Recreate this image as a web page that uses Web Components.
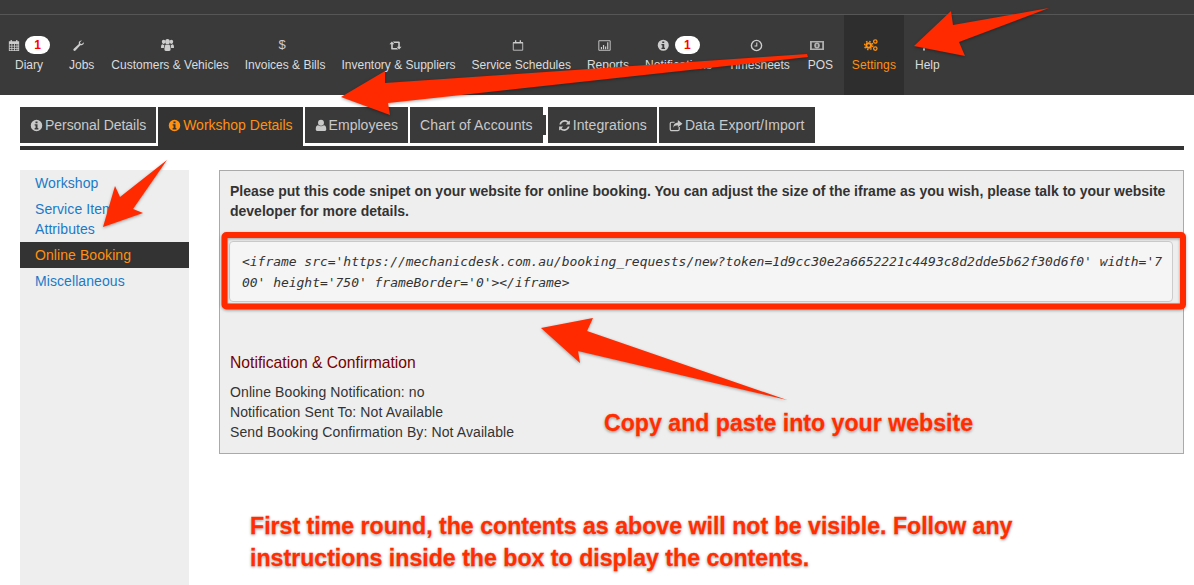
<!DOCTYPE html>
<html><head><meta charset="utf-8">
<style>
html,body{margin:0;padding:0;background:#fff}
body{width:1194px;height:585px;overflow:hidden;position:relative;font-family:"Liberation Sans",Arial,sans-serif}
</style></head><body>
<app-page></app-page>
<script>
const I={
calendar:'<svg viewBox="0 0 14 14" width="12" height="13" preserveAspectRatio="none"><path fill="currentColor" fill-rule="evenodd" d="M1 2.500h2V1h1.500v1.500h5V1H11v1.500h2V13H1zM2 5.500v1.700h2V5.500zm3 0v1.700h2V5.500zm3 0v1.700h2V5.500zm3 0v1.700h1V5.500zM2 8.200v1.700h2V8.200zm3 0v1.700h2V8.200zm3 0v1.700h2V8.200zm3 0v1.700h1V8.200zM2 10.900V12h2v-1.100zm3 0V12h2v-1.100zm3 0V12h2v-1.100zm3 0V12h1v-1.100z"/></svg>',
wrench:'<svg viewBox="0 0 14 14" width="13" height="13"><path fill="currentColor" d="M12.800 3.600c.2 1.400-.8 3-2.400 3.200-.5.1-1 0-1.400-.1L3.800 12.400c-.6.6-1.500.6-2 .1s-.5-1.300.1-1.900l5.500-5.200c-.2-.5-.2-1-.1-1.500.4-1.500 1.900-2.500 3.400-2.200L8.600 3.600l.4 1.500 1.500.3z"/></svg>',
users:'<svg viewBox="0 .5 16 12.500" width="13" height="12" preserveAspectRatio="none"><g fill="currentColor"><circle cx="3.200" cy="3.400" r="2.200"/><circle cx="12.800" cy="3.400" r="2.200"/><circle cx="8" cy="3.400" r="2.900"/><path d="M0 9.500C0 7 .8 6 2 6c.7.6 1.500.8 2.400.6-.5.8-.8 1.700-.8 3.400H1c-.6 0-1-.2-1-.5zM16 9.500C16 7 15.200 6 14 6c-.7.6-1.500.8-2.400.6.5.8.8 1.700.8 3.400H15c.6 0 1-.2 1-.5zM4.200 11.200c0-3 1-4.900 2.400-4.900.9.700 1.900.7 2.800 0 1.400 0 2.400 1.900 2.400 4.900 0 1-.6 1.800-1.800 1.800H6c-1.200 0-1.800-.8-1.800-1.800z"/></g></svg>',
retweet:'<svg viewBox="0 0 14 10" width="13" height="9"><path fill="currentColor" d="M.3 3.700 3 .5 5.700 3.700H4V7.700H8.500L10 9.500H3.300C2.600 9.500 2.200 9.100 2.200 8.500V3.700zM13.700 6.300 11 9.500 8.300 6.300H10V2.300H5.500L4 .5H10.700C11.400 .5 11.800 .9 11.800 1.500V6.300z"/></svg>',
calEmpty:'<svg viewBox="0 0 14 14" width="12" height="13"><path fill="none" stroke="currentColor" d="M1.500 3.500h11v9h-11z"/><path fill="currentColor" d="M1.500 3h11v1.800h-11zM3.500 .8h1.500V4H3.500zM9 .8h1.500V4H9z"/></svg>',
reports:'<svg viewBox="0 0 14 12" width="13" height="11"><path fill="none" stroke="currentColor" d="M.8.8h12.400v10.400H.8z"/><path fill="currentColor" d="M3 7.500h1.300V10H3zm2.300-2h1.300V10H5.300zm2.300 1.500h1.300v3H7.600zm2.300-4.500h1.300V10H9.900z"/></svg>',
info:'<svg class="i" viewBox="0 0 14 14"><path fill="currentColor" fill-rule="evenodd" d="M7 .8a6.200 6.200 0 1 0 0 12.400A6.200 6.200 0 0 0 7 .8zM5.900 2.800h2.200v1.800H5.900zM5 5.600h3.100v4.200h.9v1.500H5V9.800h1V7.100H5z"/></svg>',
question:'<svg viewBox="0 0 8 12" width="8" height="12"><path fill="none" stroke="currentColor" stroke-width="1.800" d="M1 3.500C1 .6 7 .4 7 3.500 7 5.600 4 5.500 4 8"/><path fill="currentColor" d="M3 9.300h2V11.500H3z"/></svg>',
clock:'<svg viewBox="0 0 14 14" width="13" height="13"><circle cx="7" cy="7" r="5.500" fill="none" stroke="currentColor" stroke-width="1.500"/><path fill="none" stroke="currentColor" stroke-width="1.200" d="M7.300 3.800V7.600H4.800"/></svg>',
money:'<svg viewBox="0 0 14 9" width="14" height="9"><path fill="currentColor" fill-opacity=".8" fill-rule="evenodd" d="M0 0h14v9H0zM1.800 1.500v6h10.400v-6z"/><ellipse cx="7" cy="4.500" rx="2.800" ry="2.900" fill="currentColor" fill-opacity=".8"/><path fill="#3a3a3a" d="M6.400 3h1.200v3H6.400z"/></svg>',
cogs:'<svg viewBox="0 0 14 12" width="14" height="12"><circle cx="4.700" cy="6.500" r="3.300" fill="currentColor"/><circle cx="4.700" cy="6.500" r="4.100" fill="none" stroke="currentColor" stroke-width="1.500" stroke-dasharray="1.500 1.720"/><circle cx="4.700" cy="6.500" r="1.300" fill="#2e2e2e"/><g fill="none" stroke="currentColor" stroke-width="1.300"><circle cx="11.300" cy="2.500" r="1.700"/><circle cx="11.300" cy="9.600" r="1.700"/></g></svg>',
user:'<svg viewBox="0 0 13 14" width="12" height="13"><g fill="currentColor"><circle cx="6.500" cy="4" r="3.200"/><path d="M.8 11c0-2.800 1-4.300 2.600-4.300 1.800 1.500 4.400 1.500 6.200 0 1.600 0 2.600 1.500 2.600 4.300 0 1.300-.8 2-2 2H2.800c-1.200 0-2-.7-2-2z"/></g></svg>',
refresh:'<svg viewBox="0 0 14 14" width="13" height="13"><path fill="currentColor" d="M12.800 1.500v4.300H8.500l1.700-1.700C9.500 3.500 8.400 3 7.200 3 5.400 3 3.900 4.100 3.400 5.800H1.500C2 3.100 4.400 1.200 7.200 1.200c1.700 0 3.200.7 4.300 1.600zM1.200 12.500V8.200h4.300L3.800 9.900c.7.600 1.800 1.100 3 1.100 1.800 0 3.300-1.100 3.800-2.800h1.900c-.5 2.700-2.900 4.600-5.700 4.600-1.700 0-3.200-.7-4.300-1.600z"/></svg>',
share:'<svg viewBox="0 0 15 14" width="14" height="13"><path fill="none" stroke="currentColor" stroke-width="1.300" d="M11 8.500V11c0 1-.6 1.500-1.500 1.500H2.800c-.9 0-1.500-.5-1.500-1.500V5c0-1 .6-1.500 1.500-1.500H6"/><path fill="currentColor" d="M9.500 1 14.500 5 9.500 9V6.800C7 6.800 5.500 7.500 4.500 9.500c0-3.500 1.800-5.700 5-5.800z"/></svg>',
dollar:'<span style="font:13px/14px \'Liberation Sans\',sans-serif">$</span>'
};
function def(name,css,html){customElements.define(name,class extends HTMLElement{connectedCallback(){if(this.shadowRoot)return;const r=this.attachShadow({mode:'open'});r.innerHTML='<style>'+css+'</style>'+(typeof html==='function'?html(this):html);}});}

def('nav-item',`
:host{display:flex;flex-direction:column;align-items:center;padding:0 var(--pad,8px);padding-right:var(--padr,var(--pad,8px));height:80px;box-sizing:border-box;color:#dcdcdc;font-size:12px;line-height:14px;flex:none;letter-spacing:var(--ls,0)}
:host([active]){background:#2e2e2e;color:#ff9010}
.top{height:18px;margin-top:21px;display:flex;align-items:center;gap:5px;color:#cdcdcd}
.top.solo{padding-right:6px}
:host([active]) .top{color:#ff9010}
.ic{display:flex;align-items:center;justify-content:center}
.ic svg.i{width:12.5px;height:12.5px}
.b{background:#fff;color:#f00;font-weight:700;font-size:12px;line-height:18px;width:25px;height:18px;border-radius:9px;text-align:center}
.l{margin-top:4px;white-space:nowrap;min-width:var(--min,0);text-align:center}
`,h=>{const b=h.getAttribute('badge');return `<div class="top${b?'':' solo'}"><span class="ic">${I[h.getAttribute('icon')]}</span>${b?`<span class="b">${b}</span>`:''}</div><div class="l"><slot></slot></div>`});

def('top-bar',`
:host{display:block;height:95px;background:#3a3a3a;box-sizing:border-box}
.line{height:15px;box-sizing:border-box;border-bottom:1px solid #565656}
nav{display:flex;height:80px}
`,`<div class="line"></div><nav><slot></slot></nav>`);

def('tab-item',`
:host{display:flex;align-items:center;gap:2px;height:36px;padding:0 10px;background:#3a3a3a;color:#c9c9c9;font-size:14px;flex:none;position:relative;white-space:nowrap;letter-spacing:var(--ls,0)}
:host([active]){background:#333;color:#ff9010;height:39px;padding-bottom:3px;box-sizing:border-box}
.ic{display:flex;align-items:center;justify-content:center}
.ic svg.i{width:13px;height:13px}
:host([notch])::after{content:"";position:absolute;left:100%;top:8px;height:20px;width:3px;background:#3a3a3a}
`,h=>{const i=h.getAttribute('icon');return (i?`<span class="ic">${I[i]}</span>`:'')+'<slot></slot>'});

def('tab-bar',`
:host{display:flex;align-items:flex-start;gap:2px;margin:12px 10px 0 20px;height:39px;border-bottom:4px solid #333}
`,`<slot></slot>`);

def('side-menu',`
:host{display:block;width:169px;flex:none;background:#eee;height:415px}
`,`<slot></slot>`);
def('side-link',`
:host{display:block;padding:3px 15px;font-size:14px;line-height:20px;color:#1b7ac8;letter-spacing:.08px}
:host([active]){background:#333;color:#ff9010}
`,`<slot></slot>`);

def('code-box',`
:host{display:block;margin:20px 0 0 -1px;background:#f5f5f5;border:1px solid #ccc;border-radius:4px;padding:10px 6px 8px 12px;font:oblique 13px/20.500px "DejaVu Sans Mono",monospace;letter-spacing:-.03px;color:#333;word-break:break-all;white-space:pre-wrap}
`,`<slot></slot>`);

def('info-panel',`
:host{display:block;flex:1;height:284px;box-sizing:border-box;background:#eee;border:1px solid #aaa;padding:10px;color:#333}
.lead{font-weight:700;font-size:14px;line-height:20px;color:#333}
`,`<div class="lead"><slot name="lead"></slot></div><slot></slot>`);

def('notify-info',`
:host{display:block;margin-top:51px;font-size:14px;line-height:20px;color:#333;letter-spacing:.1px}
h4{margin:0 0 9px;font-weight:400;font-size:15.700px;letter-spacing:0;line-height:20px;color:#700}
`,`<h4>Notification &amp; Confirmation</h4><slot></slot>`);

def('note-text',`
:host{position:absolute;color:#ff2d00;font:700 23.150px/32px "Liberation Sans",Arial,sans-serif;-webkit-text-stroke:.3px #ff2d00;text-shadow:0 0 2px #fff,0 1px 3px rgba(0,0,0,.5);white-space:nowrap}
`,`<slot></slot>`);

def('note-layer',`
:host{position:absolute;left:0;top:0;width:1194px;height:585px;pointer-events:none;display:block}
svg{position:absolute;left:0;top:0;filter:drop-shadow(0 1px 1.500px rgba(0,0,0,.35))}
`,`<svg width="1194" height="585" viewBox="0 0 1194 585">
<g fill="#ff2a00">
<polygon points="914,46 951,11 953,25 1049,8 959,42 965,56"/>
<polygon points="341,97 385,71 385,83 807,54 808,57 388,103 390,115"/>
<polygon points="167,160 133,209 143,213 103,227 115,186 120,197"/>
<polygon points="541,328 593,318 587,331 787,400 578,351 580,363"/>
</g>
<rect x="224.500" y="235" width="958.500" height="71.500" rx="2" fill="none" stroke="#ff2a00" stroke-width="6"/>
</svg><slot></slot>`);

def('app-page',`
:host{display:block}
.body{display:flex;gap:30px;margin:20px 10px 0 20px}
`,`<top-bar>
<nav-item icon="calendar" badge="1" style="--padr:10px">Diary</nav-item>
<nav-item icon="wrench" style="--pad:9px">Jobs</nav-item>
<nav-item icon="users">Customers &amp; Vehicles</nav-item>
<nav-item icon="dollar">Invoices &amp; Bills</nav-item>
<nav-item icon="retweet">Inventory &amp; Suppliers</nav-item>
<nav-item icon="calEmpty">Service Schedules</nav-item>
<nav-item icon="reports">Reports</nav-item>
<nav-item icon="info" badge="1" style="--ls:.15px">Notifications</nav-item>
<nav-item icon="clock">Timesheets</nav-item>
<nav-item icon="money" style="--min:29px">POS</nav-item>
<nav-item icon="cogs" active style="margin-left:1px;--ls:.1px">Settings</nav-item>
<nav-item icon="question" style="--pad:11px">Help</nav-item>
</top-bar>
<tab-bar>
<tab-item icon="info" style="--ls:-.05px">Personal Details</tab-item>
<tab-item icon="info" active>Workshop Details</tab-item>
<tab-item icon="user" style="--ls:.02px">Employees</tab-item>
<tab-item notch style="--ls:.13px">Chart of Accounts</tab-item>
<tab-item icon="refresh" style="margin-left:3px;--ls:.08px">Integrations</tab-item>
<tab-item icon="share" style="--ls:.12px">Data Export/Import</tab-item>
</tab-bar>
<div class="body">
<side-menu>
<side-link>Workshop</side-link>
<side-link>Service Item Attributes</side-link>
<side-link active>Online Booking</side-link>
<side-link>Miscellaneous</side-link>
</side-menu>
<info-panel>
<span slot="lead">Please put this code snipet on your website for online booking. You can adjust the size of the iframe as you wish, please talk to your website developer for more details.</span>
<code-box>&lt;iframe src='https://mechanicdesk.com.au/booking_requests/new?token=1d9cc30e2a6652221c4493c8d2dde5b62f30d6f0' width='700' height='750' frameBorder='0'&gt;&lt;/iframe&gt;</code-box>
<notify-info>
<div>Online Booking Notification: no</div>
<div>Notification Sent To: Not Available</div>
<div>Send Booking Confirmation By: Not Available</div>
</notify-info>
</info-panel>
</div>
<note-layer>
<note-text style="left:604px;top:407px">Copy and paste into your website</note-text>
<note-text style="left:250px;top:510px">First time round, the contents as above will not be visible. Follow any</note-text>
<note-text style="left:250px;top:542px">instructions inside the box to display the contents.</note-text>
</note-layer>`);
</script>
</body></html>
